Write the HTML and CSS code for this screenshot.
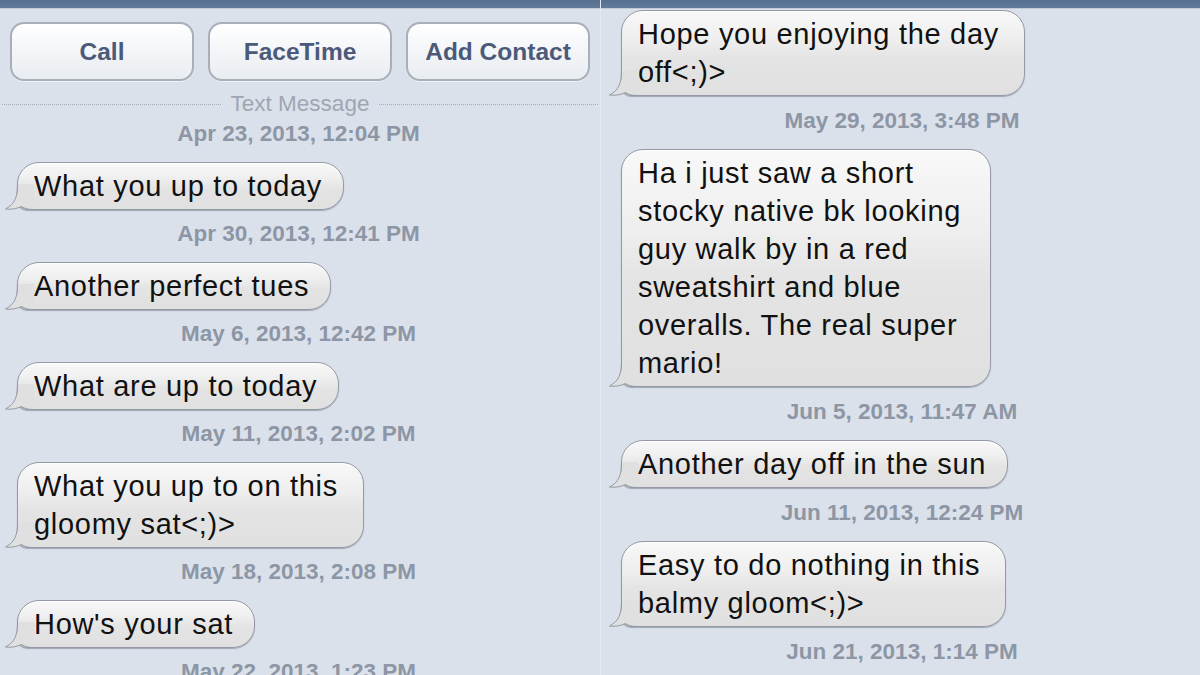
FILE: index.html
```html
<!DOCTYPE html>
<html>
<head>
<meta charset="utf-8">
<link rel="stylesheet" href="styles.css">
</head>
<body>
<div class="screen">
  <section class="panel panel-left">
    <div class="topbar"></div>
    <div class="actions">
      <button class="action">Call</button>
      <button class="action">FaceTime</button>
      <button class="action">Add Contact</button>
    </div>
    <div class="divider"><span>Text Message</span></div>
    <div class="thread">
      <div class="stamp">Apr 23, 2013, 12:04 PM</div>
      <div class="msg"><div class="bubble"><span class="bubble-text">What you up to today</span><svg class="tail" viewBox="0 0 30 26" width="30" height="26"><path class="tail-fill" d="M14,0 C14,13 11.5,20 1.5,25 C8,25.8 13,24.5 17.5,22.5 C21,24.8 24,25 30,25 L30,0 Z"/><path class="tail-line" d="M13.5,0 C13.5,13 11,20 1.5,25 C8,25.8 13,24.5 17.5,22.5 C21,24.8 24,25.5 29,25.5 L30,25.5"/></svg></div></div>
      <div class="stamp">Apr 30, 2013, 12:41 PM</div>
      <div class="msg"><div class="bubble"><span class="bubble-text">Another perfect tues</span><svg class="tail" viewBox="0 0 30 26" width="30" height="26"><path class="tail-fill" d="M14,0 C14,13 11.5,20 1.5,25 C8,25.8 13,24.5 17.5,22.5 C21,24.8 24,25 30,25 L30,0 Z"/><path class="tail-line" d="M13.5,0 C13.5,13 11,20 1.5,25 C8,25.8 13,24.5 17.5,22.5 C21,24.8 24,25.5 29,25.5 L30,25.5"/></svg></div></div>
      <div class="stamp">May 6, 2013, 12:42 PM</div>
      <div class="msg"><div class="bubble"><span class="bubble-text">What are up to today</span><svg class="tail" viewBox="0 0 30 26" width="30" height="26"><path class="tail-fill" d="M14,0 C14,13 11.5,20 1.5,25 C8,25.8 13,24.5 17.5,22.5 C21,24.8 24,25 30,25 L30,0 Z"/><path class="tail-line" d="M13.5,0 C13.5,13 11,20 1.5,25 C8,25.8 13,24.5 17.5,22.5 C21,24.8 24,25.5 29,25.5 L30,25.5"/></svg></div></div>
      <div class="stamp">May 11, 2013, 2:02 PM</div>
      <div class="msg"><div class="bubble multi"><span class="bubble-text">What you up to on this<br>gloomy sat&lt;;)&gt;</span><svg class="tail" viewBox="0 0 30 26" width="30" height="26"><path class="tail-fill" d="M14,0 C14,13 11.5,20 1.5,25 C8,25.8 13,24.5 17.5,22.5 C21,24.8 24,25 30,25 L30,0 Z"/><path class="tail-line" d="M13.5,0 C13.5,13 11,20 1.5,25 C8,25.8 13,24.5 17.5,22.5 C21,24.8 24,25.5 29,25.5 L30,25.5"/></svg></div></div>
      <div class="stamp">May 18, 2013, 2:08 PM</div>
      <div class="msg"><div class="bubble"><span class="bubble-text">How's your sat</span><svg class="tail" viewBox="0 0 30 26" width="30" height="26"><path class="tail-fill" d="M14,0 C14,13 11.5,20 1.5,25 C8,25.8 13,24.5 17.5,22.5 C21,24.8 24,25 30,25 L30,0 Z"/><path class="tail-line" d="M13.5,0 C13.5,13 11,20 1.5,25 C8,25.8 13,24.5 17.5,22.5 C21,24.8 24,25.5 29,25.5 L30,25.5"/></svg></div></div>
      <div class="stamp">May 22, 2013, 1:23 PM</div>
    </div>
  </section>
  <section class="panel panel-right">
    <div class="topbar"></div>
    <div class="thread thread-right">
      <div class="msg"><div class="bubble multi"><span class="bubble-text">Hope you enjoying the day<br>off&lt;;)&gt;</span><svg class="tail" viewBox="0 0 30 26" width="30" height="26"><path class="tail-fill" d="M14,0 C14,13 11.5,20 1.5,25 C8,25.8 13,24.5 17.5,22.5 C21,24.8 24,25 30,25 L30,0 Z"/><path class="tail-line" d="M13.5,0 C13.5,13 11,20 1.5,25 C8,25.8 13,24.5 17.5,22.5 C21,24.8 24,25.5 29,25.5 L30,25.5"/></svg></div></div>
      <div class="stamp">May 29, 2013, 3:48 PM</div>
      <div class="msg"><div class="bubble multi wide"><span class="bubble-text">Ha i just saw a short<br>stocky native bk looking<br>guy walk by in a red<br>sweatshirt and blue<br>overalls. The real super<br>mario!</span><svg class="tail" viewBox="0 0 30 26" width="30" height="26"><path class="tail-fill" d="M14,0 C14,13 11.5,20 1.5,25 C8,25.8 13,24.5 17.5,22.5 C21,24.8 24,25 30,25 L30,0 Z"/><path class="tail-line" d="M13.5,0 C13.5,13 11,20 1.5,25 C8,25.8 13,24.5 17.5,22.5 C21,24.8 24,25.5 29,25.5 L30,25.5"/></svg></div></div>
      <div class="stamp">Jun 5, 2013, 11:47 AM</div>
      <div class="msg"><div class="bubble"><span class="bubble-text">Another day off in the sun</span><svg class="tail" viewBox="0 0 30 26" width="30" height="26"><path class="tail-fill" d="M14,0 C14,13 11.5,20 1.5,25 C8,25.8 13,24.5 17.5,22.5 C21,24.8 24,25 30,25 L30,0 Z"/><path class="tail-line" d="M13.5,0 C13.5,13 11,20 1.5,25 C8,25.8 13,24.5 17.5,22.5 C21,24.8 24,25.5 29,25.5 L30,25.5"/></svg></div></div>
      <div class="stamp">Jun 11, 2013, 12:24 PM</div>
      <div class="msg"><div class="bubble multi"><span class="bubble-text">Easy to do nothing in this<br>balmy gloom&lt;;)&gt;</span><svg class="tail" viewBox="0 0 30 26" width="30" height="26"><path class="tail-fill" d="M14,0 C14,13 11.5,20 1.5,25 C8,25.8 13,24.5 17.5,22.5 C21,24.8 24,25 30,25 L30,0 Z"/><path class="tail-line" d="M13.5,0 C13.5,13 11,20 1.5,25 C8,25.8 13,24.5 17.5,22.5 C21,24.8 24,25.5 29,25.5 L30,25.5"/></svg></div></div>
      <div class="stamp">Jun 21, 2013, 1:14 PM</div>
    </div>
  </section>
</div>
</body>
</html>
```

FILE: styles.css
```css
* { box-sizing: border-box; }
html, body { margin: 0; padding: 0; }
body {
  width: 1200px;
  height: 675px;
  overflow: hidden;
  background: #dbe1eb;
  font-family: "Liberation Sans", Arial, Helvetica, sans-serif;
}
.screen {
  display: flex;
  width: 1200px;
  height: 675px;
}
.panel {
  height: 675px;
  overflow: hidden;
  background: #dbe1eb;
}
.panel-left { width: 600px; }
.panel-right {
  width: 600px;
  border-left: 1px solid #e4e8ef;
}
.topbar {
  height: 9px;
  background: linear-gradient(#56708f, #627b9a);
  border-bottom: 1px solid #c3cad6;
}
.actions {
  display: flex;
  gap: 14px;
  padding: 0 10px;
  margin-top: 13px;
}
.action {
  width: 184px;
  height: 59px;
  border: 2px solid #a9afb9;
  border-radius: 14px;
  background: linear-gradient(#ffffff, #f3f5f8 50%, #e9ecf1);
  box-shadow: 0 1px 0 #eef1f5;
  font-family: "Liberation Sans", Arial, sans-serif;
  font-weight: bold;
  font-size: 24.5px;
  color: #4c5a79;
  padding: 0;
}
.divider {
  display: flex;
  align-items: center;
  height: 24px;
  margin-top: 11px;
  padding: 0 2px;
}
.divider::before, .divider::after {
  content: "";
  flex: 1;
  border-top: 1px dotted #a6adb9;
}
.divider span {
  margin: 0 10px;
  font-size: 22.5px;
  line-height: 24px;
  color: #9fa6b2;
}
.thread { display: flex; flex-direction: column; }
.panel-left .thread { padding-right: 3px; }
.thread-right { padding-left: 3px; padding-top: 1px; }
.stamp {
  text-align: center;
  font-size: 22.5px;
  font-weight: bold;
  line-height: 24px;
  color: #8d96a5;
  margin: 12px 0 16px;
}
.panel-left .stamp:first-child { margin-top: 6px; }
.thread-right .stamp { margin-top: 13px; }
.msg {
  display: flex;
  padding-left: 17px;
}
.bubble {
  position: relative;
  padding: 4px 21px 4px 16px;
  border: 1px solid #939aa3;
  border-radius: 22px;
  border-bottom-left-radius: 10px;
  background: linear-gradient(180deg, #f8f8f8 0%, #eeeeee 35%, #e4e4e4 55%, #e0e0e0 100%);
  box-shadow: inset 0 1px 0 #ffffff, 0 1px 1px rgba(50, 60, 80, 0.35);
  font-size: 29px;
  letter-spacing: 0.7px;
  line-height: 38px;
  color: #111;
}
.bubble.multi { padding-right: 25px; }
.bubble.wide { padding-right: 29px; }
.bubble-text { position: relative; z-index: 1; white-space: nowrap; }
.tail {
  position: absolute;
  left: -14px;
  bottom: -1px;
  z-index: 0;
  overflow: visible;
}
.tail-fill { fill: #e0e0e0; }
.tail-line { fill: none; stroke: #939aa3; stroke-width: 1; }
```
